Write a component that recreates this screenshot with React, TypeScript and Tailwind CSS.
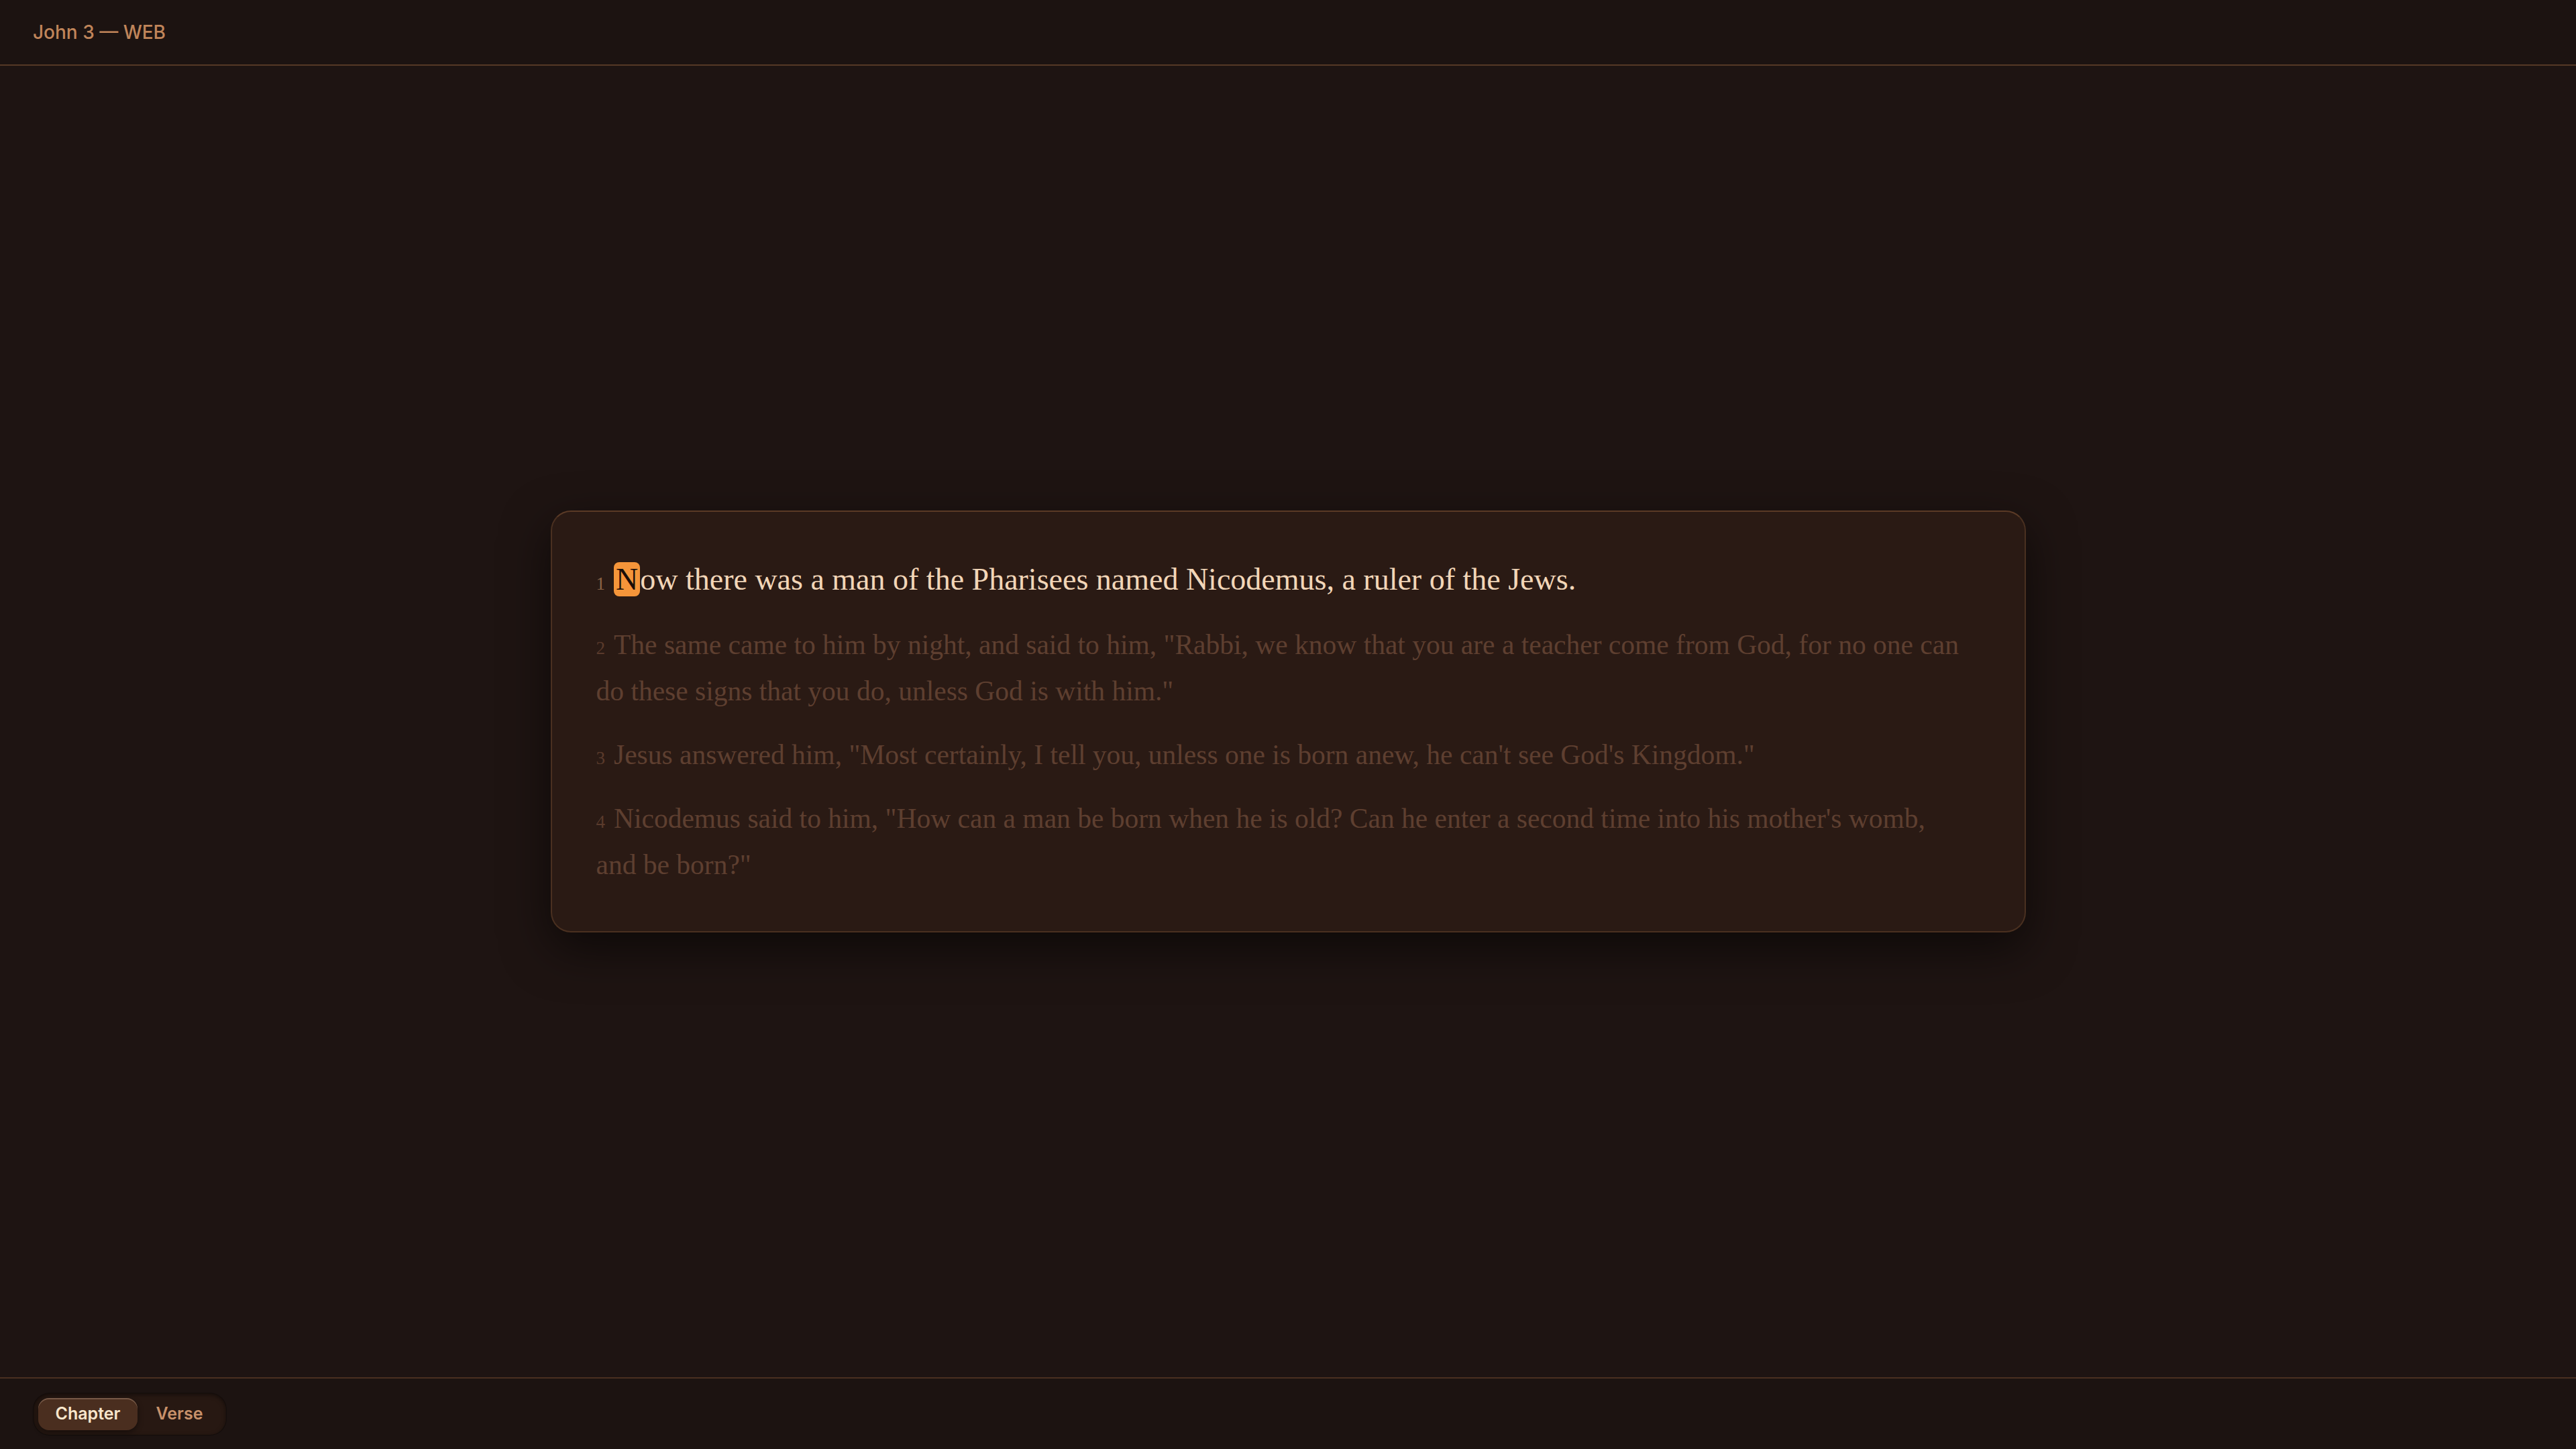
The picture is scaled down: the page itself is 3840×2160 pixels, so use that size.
import React from "react";

type Verse = { n: number; text: string };

const verses: Verse[] = [
  { n: 1, text: "Now there was a man of the Pharisees named Nicodemus, a ruler of the Jews." },
  {
    n: 2,
    text: "The same came to him by night, and said to him, \"Rabbi, we know that you are a teacher come from God, for no one can do these signs that you do, unless God is with him.\"",
  },
  {
    n: 3,
    text: "Jesus answered him, \"Most certainly, I tell you, unless one is born anew, he can't see God's Kingdom.\"",
  },
  {
    n: 4,
    text: "Nicodemus said to him, \"How can a man be born when he is old? Can he enter a second time into his mother's womb, and be born?\"",
  },
];

function ActiveVerse({ verse }: { verse: Verse }) {
  // first letter carries the reading cursor
  const first = verse.text.slice(0, 1);
  const rest = verse.text.slice(1);
  return (
    <p className="mb-[26px] text-[46px] leading-[74px] text-[#f2d6b8]">
      <span className="mr-[13px] text-[27px] leading-none text-[#8c6446]">{verse.n}</span>
      <span className="rounded-[8px] bg-[#f5953a] px-[3px] leading-none text-[#1a0e08]">{first}</span>
      {rest}
    </p>
  );
}

function DimVerse({ verse, last }: { verse: Verse; last: boolean }) {
  return (
    <p className={`${last ? "" : "mb-[26px]"} text-[41.5px] leading-[69px] text-[#5e3f30]`}>
      <span className="mr-[13px] text-[27px] leading-none text-[#5a3a2c]">{verse.n}</span>
      {verse.text}
    </p>
  );
}

export default function App() {
  return (
    <div className="flex h-screen flex-col bg-[#1e1412] font-['Inter',sans-serif]">
      <header className="flex h-[98px] shrink-0 items-center border-b-2 border-[#553826] bg-[#1c1311] px-[49px]">
        <span className="text-[28px] font-medium text-[#c0855a]">John 3 — WEB</span>
      </header>

      <main className="flex flex-1 items-center justify-center">
        <div className="w-[2199px] rounded-[30px] border-2 border-[#4a3020] border-t-[#5a3a26] bg-[#2a1a14] py-[64px] pl-[66px] pr-[80px] font-['Liberation_Serif',serif] shadow-[0_24px_70px_rgba(0,0,0,0.55)]">
          {verses.map((v, i) =>
            i === 0 ? (
              <ActiveVerse key={v.n} verse={v} />
            ) : (
              <DimVerse key={v.n} verse={v} last={i === verses.length - 1} />
            ),
          )}
        </div>
      </main>

      <footer className="flex h-[107px] shrink-0 items-center border-t-2 border-[#4a3020] bg-[#1c1311] px-[50px]">
        <div className="flex rounded-[24px] bg-[#271812] p-[7px] shadow-[inset_0_2px_6px_rgba(0,0,0,0.5),0_0_0_1px_rgba(0,0,0,0.3)]">
          <button className="h-[48px] w-[148px] rounded-[16px] bg-[#4a2e1f] text-[25px] font-semibold text-[#f8e6cc] shadow-[inset_0_2px_0_rgba(255,220,190,0.25),0_3px_8px_rgba(0,0,0,0.45)]">
            Chapter
          </button>
          <button className="h-[48px] w-[125px] rounded-[16px] text-[25px] font-semibold text-[#c8916a]">
            Verse
          </button>
        </div>
      </footer>
    </div>
  );
}
